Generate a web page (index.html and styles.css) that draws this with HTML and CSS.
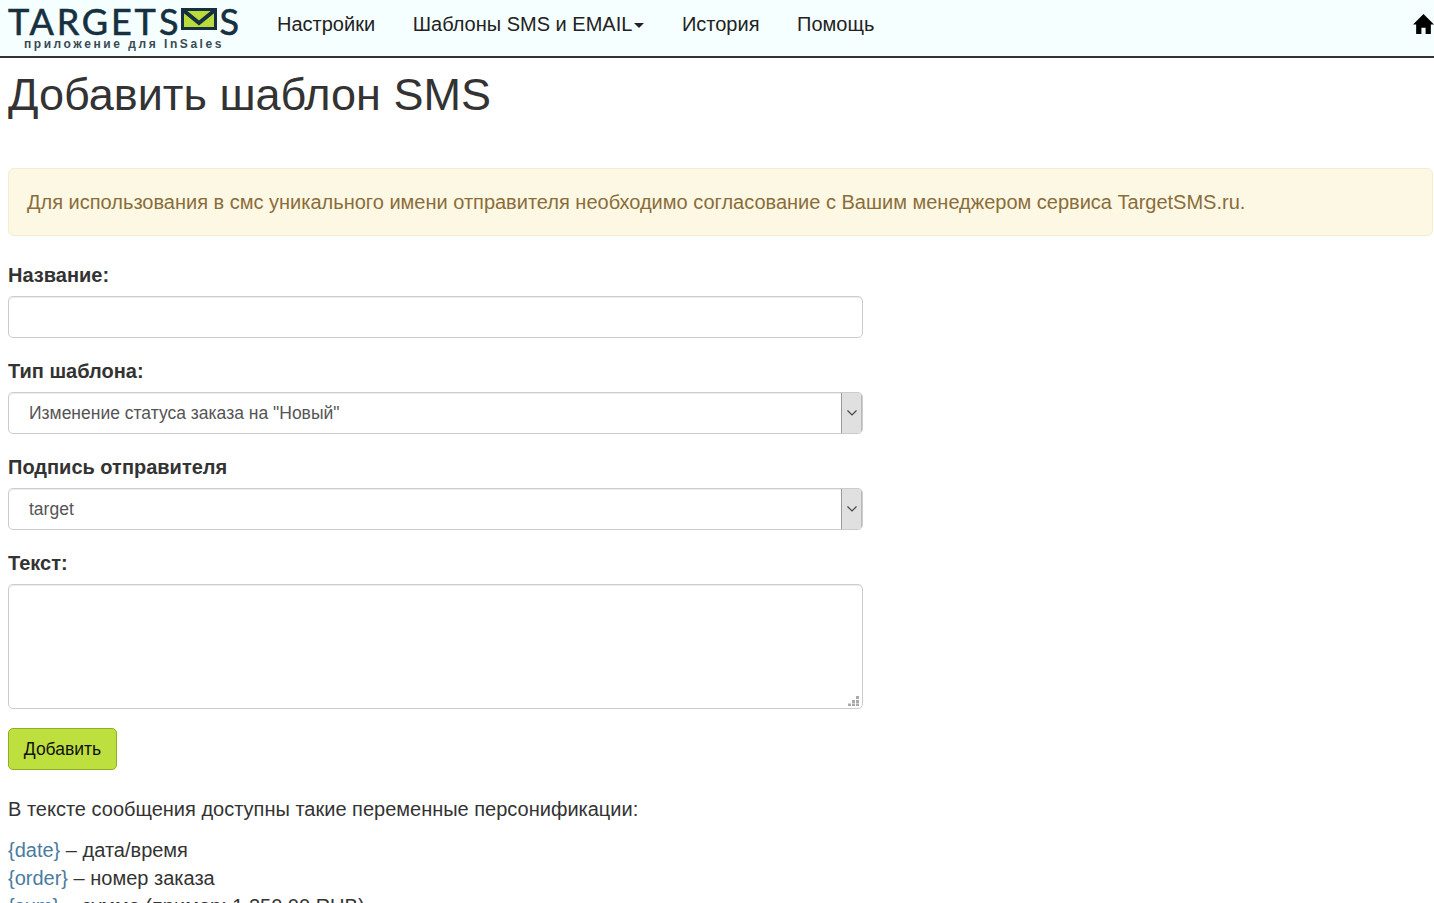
FILE: index.html
```html
<!DOCTYPE html>
<html lang="ru">
<head>
<meta charset="utf-8">
<title>Добавить шаблон SMS</title>
<link rel="stylesheet" href="styles.css">
</head>
<body>
<nav class="navbar">
  <a class="logo" href="#">
    <span class="logo-main"><span class="logo-target">TARGET</span><span class="logo-s">S</span><svg class="logo-env" viewBox="0 0 36 22" width="36" height="22"><rect x="1.500" y="1.500" width="33" height="19" fill="#b9dc3c" stroke="#16303f" stroke-width="3"/><path d="M2 2l16 13L34 2" fill="none" stroke="#16303f" stroke-width="4"/></svg><span class="logo-s">S</span></span>
    <span class="logo-sub">приложение для InSales</span>
  </a>
  <ul class="menu">
    <li><a href="#">Настройки</a></li>
    <li><a href="#">Шаблоны SMS и EMAIL<i class="caret"></i></a></li>
    <li><a href="#">История</a></li>
    <li><a href="#">Помощь</a></li>
  </ul>
  <a class="home" href="#" aria-label="Главная"><svg viewBox="0 0 20 20" width="21" height="21"><path d="M10 1L0 11h3v9h5v-6h4v6h5v-9h3z" fill="#000"/></svg></a>
</nav>
<main class="content">
  <h1>Добавить шаблон SMS</h1>
  <div class="alert">Для использования в смс уникального имени отправителя необходимо согласование с Вашим менеджером сервиса TargetSMS.ru.</div>
  <form class="form">
    <div class="field">
      <label>Название:</label>
      <input class="control" type="text">
    </div>
    <div class="field">
      <label>Тип шаблона:</label>
      <div class="select control"><span>Изменение статуса заказа на "Новый"</span><b class="arrow"><svg viewBox="0 0 12 8" width="12" height="8"><path d="M1.500 1.500L6 6l4.500-4.500" fill="none" stroke="#444" stroke-width="1.200"/></svg></b></div>
    </div>
    <div class="field">
      <label>Подпись отправителя</label>
      <div class="select control"><span>target</span><b class="arrow"><svg viewBox="0 0 12 8" width="12" height="8"><path d="M1.500 1.500L6 6l4.500-4.500" fill="none" stroke="#444" stroke-width="1.200"/></svg></b></div>
    </div>
    <div class="field">
      <label>Текст:</label>
      <div class="control area"><svg class="grip" viewBox="0 0 11 10" width="11" height="10"><path d="M8 0h3v3H8zM4 4h3v3H4zM8 4h3v3H8zM0 7.500h3v2.500H0zM4 7.500h3v2.500H4zM8 7.500h3v2.500H8z" fill="#aaa"/></svg></div>
    </div>
    <button class="btn" type="button">Добавить</button>
  </form>
  <p class="intro">В тексте сообщения доступны такие переменные персонификации:</p>
  <p class="vars">
    <a href="#">{date}</a> – дата/время<br>
    <a href="#">{order}</a> – номер заказа<br>
    <a href="#">{sum}</a> – сумма (пример: 1 250,00 RUB)
  </p>
</main>
</body>
</html>
```
FILE: styles.css
```css
* { box-sizing: border-box; }
html, body { margin: 0; height: 903px; overflow: hidden; }
body { font-family: "Liberation Sans", Arial, sans-serif; font-size: 20px; line-height: 28px; color: #333; background: #fff; }
a { text-decoration: none; }
.navbar { display: flex; align-items: flex-start; height: 58px; background: #f5ffff; border-bottom: 2px solid #333; padding-left: 8px; }
.logo { display: flex; flex-direction: column; width: 232px; color: #16303f; }
.logo-main { display: flex; align-items: flex-start; height: 38px; padding-top: 6px; font-family: Lato, "Liberation Sans", sans-serif; font-size: 36px; line-height: 30px; white-space: nowrap; -webkit-text-stroke: .6px #16303f; }
.logo-target { width: 151px; letter-spacing: 2.800px; }
.logo-s { letter-spacing: 0; }
.logo-env { margin: 2px 3px 0 2px; flex: none; }
.logo-sub { padding-left: 16px; font-size: 12px; line-height: 12px; font-weight: bold; letter-spacing: 2.550px; color: #3a4a55; white-space: nowrap; }
.menu { display: flex; gap: 37.600px; margin: 0 0 0 37px; padding: 10px 0 0; list-style: none; }
.menu a { color: #222; white-space: nowrap; }
.caret { display: inline-block; width: 0; height: 0; margin-left: 2px; vertical-align: 3px; border-top: 5px solid #222; border-left: 5px solid transparent; border-right: 5px solid transparent; }
.home { margin-left: auto; padding-top: 13px; width: 21px; display: block; }
.home svg { display: block; }
.content { padding: 0 1px 0 8px; }
h1 { margin: 10px 0 0; font-size: 45px; line-height: 54px; font-weight: normal; color: #333; }
.alert { height: 68px; margin-top: 46px; padding: 19px 18px; background: #fcf8e3; border: 1px solid #faebcc; border-radius: 6px; color: #8a6d3b; }
.form { width: 855px; margin-top: 25px; }
.field { margin-bottom: 19px; }
.field label { display: block; height: 28px; margin-bottom: 7px; font-weight: bold; }
.control { display: block; width: 100%; height: 42px; background: #fff; border: 1px solid #ccc; border-radius: 5px; box-shadow: inset 0 1px 1px rgba(0,0,0,.075); }
.select { display: flex; align-items: center; justify-content: space-between; padding-left: 20px; font-size: 17.500px; color: #555; overflow: hidden; }
.arrow { display: flex; align-items: center; justify-content: center; width: 21px; height: 100%; background: #e0e0e0; border-left: 1px solid #999; border-right: 1px solid #bbb; }
.area { position: relative; height: 125px; }
.grip { position: absolute; right: 3px; bottom: 2px; }
.btn { display: block; width: 109px; height: 42px; margin: 0; padding: 0; background: #bee03f; border: 1px solid #8fae27; border-radius: 5px; font: 17.500px/28px "Liberation Sans", Arial, sans-serif; color: #111; }
.intro { margin: 25px 0 0; }
.vars { margin: 13px 0 0; }
.vars a { color: #4a7ba0; }
```
